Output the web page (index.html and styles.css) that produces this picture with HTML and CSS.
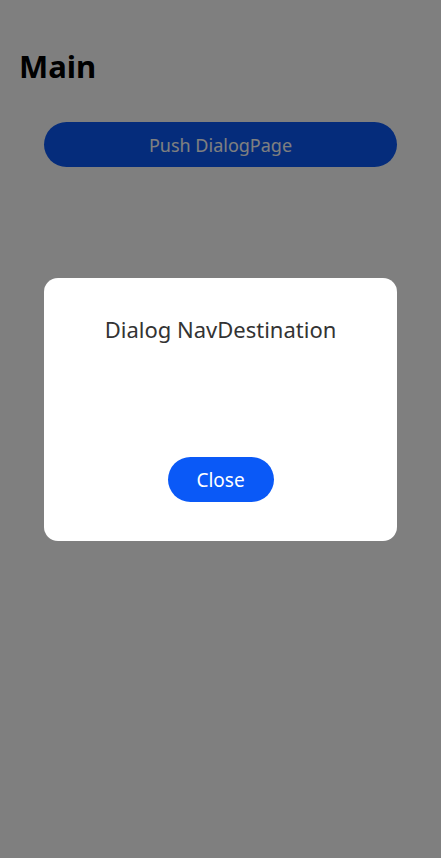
FILE: index.html
```html
<!DOCTYPE html>
<html>
<head>
<meta charset="utf-8">
<link rel="stylesheet" href="styles.css">
</head>
<body>
<div class="page">
  <h1 class="title">Main</h1>
  <button class="push-btn">Push DialogPage</button>
</div>
<div class="scrim">
  <div class="dialog">
    <div class="dialog-title">Dialog NavDestination</div>
    <button class="close-btn">Close</button>
  </div>
</div>
</body>
</html>
```
FILE: styles.css
```css
html, body {
  margin: 0;
  padding: 0;
  width: 441px;
  height: 858px;
  background: #ffffff;
  font-family: "Noto Sans", "Open Sans", sans-serif;
  overflow: hidden;
}
.page {
  display: flex;
  flex-direction: column;
  padding: 44px 44px 0 19px;
}
.title {
  margin: 0;
  font-size: 31px;
  font-weight: 700;
  line-height: 44px;
  color: #000000;
}
.push-btn {
  margin: 34px 0 0 25px;
  height: 45px;
  border: none;
  border-radius: 23px;
  background: #0a59f7;
  color: #ffffff;
  font-family: inherit;
  font-size: 18px;
}
.scrim {
  position: fixed;
  inset: 0;
  background: rgba(0, 0, 0, 0.5);
  display: flex;
  flex-direction: column;
  align-items: center;
  padding-top: 278px;
}
.dialog {
  width: 353px;
  height: 263px;
  box-sizing: border-box;
  background: #ffffff;
  border-radius: 14px;
  display: flex;
  flex-direction: column;
  align-items: center;
  padding-top: 36px;
}
.dialog-title {
  font-size: 22px;
  line-height: 30px;
  color: #333333;
}
.close-btn {
  margin-top: 113px;
  width: 106px;
  height: 45px;
  border: none;
  border-radius: 23px;
  background: #0a59f7;
  color: #ffffff;
  font-family: inherit;
  font-size: 19px;
  font-weight: 400;
}
```
